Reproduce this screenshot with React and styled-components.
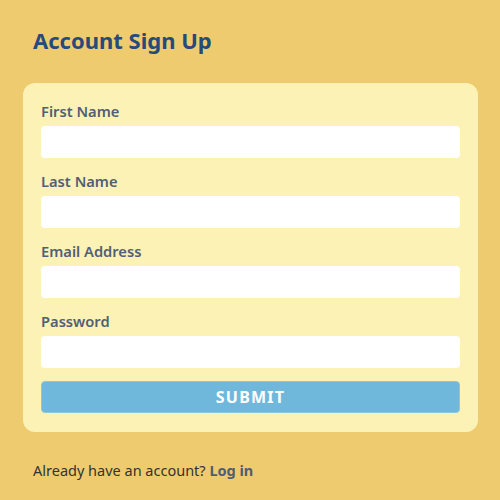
import styled, { createGlobalStyle } from "styled-components";

const GlobalStyle = createGlobalStyle`
  html, body {
    margin: 0;
    padding: 0;
    background: #efcb6f;
  }
  body {
    font-family: "Noto Sans", "Open Sans", sans-serif;
  }
`;

const Page = styled.main`
  width: 500px;
  height: 500px;
  box-sizing: border-box;
  padding: 22px 22px 0 23px;
  background: #efcb6f;
`;

const Heading = styled.h1`
  margin: 0 0 25px 10px;
  font-size: 22px;
  line-height: 36px;
  font-weight: 700;
  color: #264a7b;
`;

const Card = styled.form`
  display: flex;
  flex-direction: column;
  padding: 17px 18px 19px 18px;
  background: #fdf2b5;
  border-radius: 12px;
`;

const Field = styled.div`
  display: flex;
  flex-direction: column;
  margin-bottom: ${(p) => (p.$last ? "13px" : "12px")};
`;

const Label = styled.label`
  font-size: 14.7px;
  line-height: 22px;
  font-weight: 600;
  color: #516076;
  margin-bottom: 4px;
`;

const Input = styled.input`
  height: 32px;
  box-sizing: border-box;
  border: none;
  border-radius: 4px;
  background: #ffffff;
  padding: 0 10px;
  font: inherit;
  outline: none;
`;

const Button = styled.button`
  height: 32px;
  border: 1px solid #8cc6d9;
  border-radius: 4px;
  background: #6fb8db;
  color: #ffffff;
  font-family: inherit;
  font-size: 16px;
  font-weight: 700;
  letter-spacing: 1.2px;
  cursor: pointer;
`;

const Footer = styled.p`
  margin: 28px 0 0 10px;
  font-size: 14.5px;
  line-height: 20px;
  color: #333333;
`;

const LoginLink = styled.a`
  font-weight: 700;
  color: #4f5d73;
  text-decoration: none;
`;

const fields = ["First Name", "Last Name", "Email Address", "Password"];

export default function App() {
  return (
    <>
      <GlobalStyle />
      <Page>
        <Heading>Account Sign Up</Heading>
        <Card onSubmit={(e) => e.preventDefault()}>
          {fields.map((name, i) => (
            <Field key={name} $last={i === fields.length - 1}>
              <Label>{name}</Label>
              <Input type={name === "Password" ? "password" : "text"} />
            </Field>
          ))}
          <Button type="submit">SUBMIT</Button>
        </Card>
        <Footer>
          Already have an account? <LoginLink href="#">Log in</LoginLink>
        </Footer>
      </Page>
    </>
  );
}
